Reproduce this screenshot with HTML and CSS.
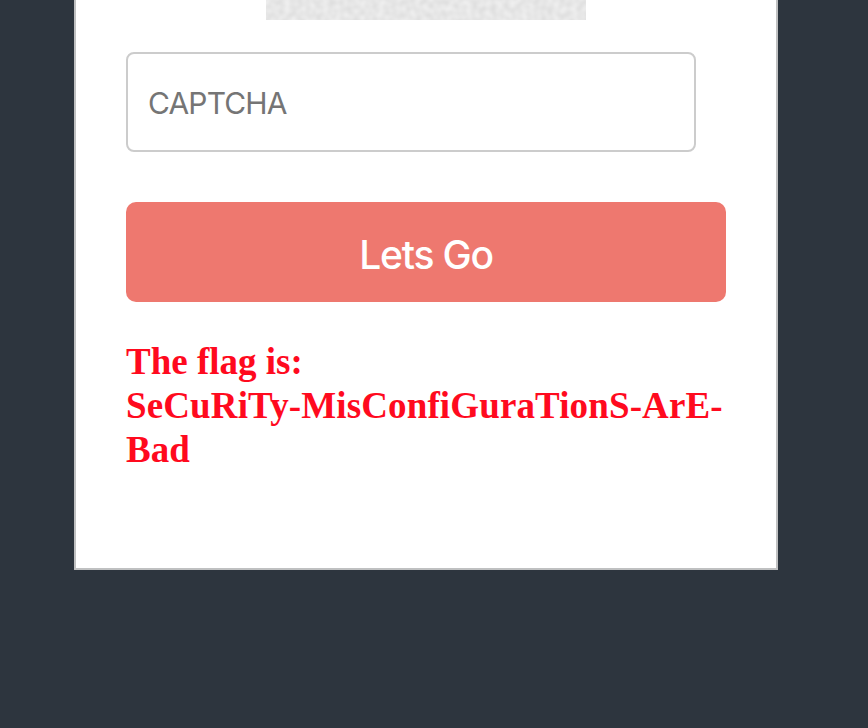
FILE: index.html
```html
<!DOCTYPE html>
<html lang="en">
<head>
<meta charset="utf-8">
<title>Login</title>
<link rel="stylesheet" href="styles.css">
</head>
<body>
<main class="card">
<svg class="captcha" viewBox="0 0 320 20" aria-hidden="true">
<filter id="grain" x="0" y="0" width="100%" height="100%" color-interpolation-filters="sRGB">
<feTurbulence type="fractalNoise" baseFrequency="0.16" numOctaves="1" seed="4"/>
<feColorMatrix values="0.11 0 0 0 0.85  0.11 0 0 0 0.85  0.11 0 0 0 0.85  0 0 0 0 1"/>
</filter>
<rect width="320" height="20" fill="#e6e6e6" filter="url(#grain)"/>
</svg>
<input class="field" type="text" placeholder="CAPTCHA">
<button class="submit" type="button">Lets Go</button>
<p class="flag">The flag is:<br><span class="code">SeCuRiTy-MisConfiGuraTionS-ArE-</span><br>Bad</p>
</main>
</body>
</html>
```
FILE: styles.css
```css
* { box-sizing: border-box; }
body { margin: 0; height: 728px; background: #2d353e; overflow: hidden; }
.card { width: 704px; height: 570px; margin-left: 74px; padding: 0 50px; background: #fff; border: 2px solid #bfc0c1; border-top: 0; }
.captcha { display: block; width: 320px; height: 20px; margin: 0 auto 32px; }
.field { display: block; width: 570px; height: 100px; padding: 2px 20px 0; border: 2px solid #ccc; border-radius: 8px; font: 30px Inter, sans-serif; letter-spacing: -0.85px; background: #fff; }
.field::placeholder { color: #757575; opacity: 1; }
.submit { display: block; width: 600px; height: 100px; margin: 50px 0 38px; padding: 4px 0 0; border: 0; border-radius: 10px; background: #ee786f; color: #fff; font: 500 39px Inter, sans-serif; letter-spacing: -1.2px; }
.flag { margin: 0; color: #ff0a1e; font: bold 37px/44px "Liberation Serif", serif; white-space: nowrap; }
.code { letter-spacing: 0.13px; }
```
